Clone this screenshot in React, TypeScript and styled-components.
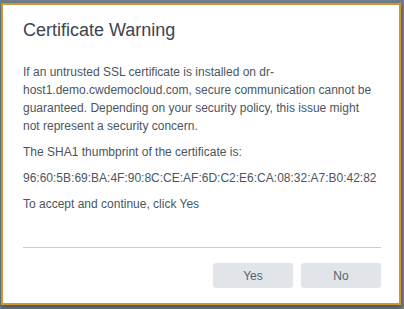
import styled, { createGlobalStyle } from 'styled-components'

const GlobalStyle = createGlobalStyle`
  html, body {
    margin: 0;
    padding: 0;
    background: #717d89;
    font-family: "Liberation Sans", Arial, sans-serif;
  }
`

const Page = styled.div`
  height: 309px;
  padding: 3px 0 0 1px;
  box-sizing: border-box;
  overflow: hidden;
`

const Dialog = styled.div`
  width: 400px;
  height: 302px;
  box-sizing: border-box;
  border: 2px solid #cd9831;
  background: #ffffff;
  box-shadow: 0 3px 5px rgba(40, 48, 58, 0.55);
  display: flex;
  flex-direction: column;
`

const Header = styled.div`
  padding: 14px 20px 0;
`

const Title = styled.h2`
  margin: 0;
  font-size: 18px;
  line-height: 22px;
  font-weight: 400;
  color: #3b4450;
`

const Body = styled.div`
  padding: 22px 22px 0 20px;
  flex: 1;
`

const Text = styled.p`
  margin: 0 0 8px;
  font-size: 12px;
  line-height: 18px;
  color: #4c5561;
`

const Footer = styled.div`
  margin: 0 18px 0 20px;
  border-top: 1px solid #c9ced4;
  display: flex;
  justify-content: flex-end;
  gap: 8px;
  padding: 15px 0 15px;
`

const Button = styled.button`
  width: 80px;
  height: 25px;
  border: none;
  border-radius: 3px;
  background: #e1e5ea;
  color: #58616c;
  font-family: "Liberation Sans", Arial, sans-serif;
  font-size: 12px;
  padding: 0;
  cursor: pointer;
`

export default function App() {
  return (
    <>
      <GlobalStyle />
      <Page>
        <Dialog>
          <Header>
            <Title>Certificate Warning</Title>
          </Header>
          <Body>
            <Text>
              If an untrusted SSL certificate is installed on dr-host1.demo.cwdemocloud.com, secure
              communication cannot be guaranteed. Depending on your security policy, this issue might
              not represent a security concern.
            </Text>
            <Text>The SHA1 thumbprint of the certificate is:</Text>
            <Text>96:60:5B:69:BA:4F:90:8C:CE:AF:6D:C2:E6:CA:08:32:A7:B0:42:82</Text>
            <Text>To accept and continue, click Yes</Text>
          </Body>
          <Footer>
            <Button>Yes</Button>
            <Button>No</Button>
          </Footer>
        </Dialog>
      </Page>
    </>
  )
}
